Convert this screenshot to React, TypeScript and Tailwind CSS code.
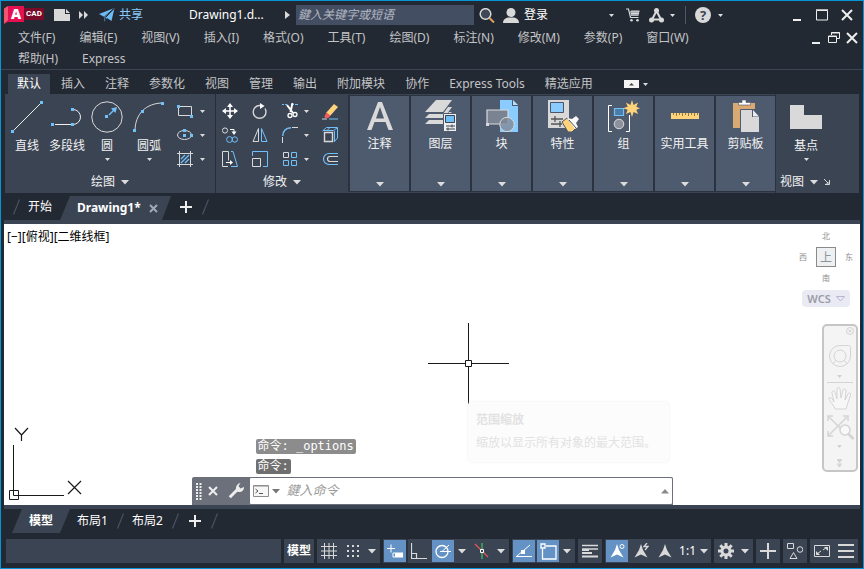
import type { ReactNode } from 'react';

const W = '#d9d9d9';
const B = '#72c0fa';

function Caret({ big = false }: { big?: boolean }) {
  return big ? (
    <svg width="8" height="5" viewBox="0 0 8 5" className="shrink-0"><path d="M0 0h8L4 4.6z" fill="#dcdcdc" /></svg>
  ) : (
    <svg width="5" height="3" viewBox="0 0 5 3" className="shrink-0"><path d="M0 0h5L2.5 3z" fill="#dcdcdc" /></svg>
  );
}

function Dot({ x, y }: { x: number; y: number }) {
  return <rect x={x} y={y} width="3" height="3" fill={B} />;
}

function Svg({ w, h, children }: { w: number; h: number; children: ReactNode }) {
  return (
    <svg width={w} height={h} viewBox={`0 0 ${w} ${h}`} fill="none" className="shrink-0">
      {children}
    </svg>
  );
}

/* ---------- title bar ---------- */

function TitleBar() {
  return (
    <header className="flex h-[26px] shrink-0 items-center pt-[2px] pr-[10px] pl-[3px] text-[12px] text-white">
      <button aria-label="应用程序菜单" className="relative h-[18px] w-10 shrink-0">
        <svg width="40" height="18" viewBox="0 0 40 18">
          <path d="M0 2.500 4 0v14.500L0 18z" fill="#f0566f" />
          <path d="M4 0h16v16H4l-4 2 4-3.500z" fill="#e51050" />
          <path d="M20 2h20v12H20z" fill="#7a0a2a" />
        </svg>
        <span className="absolute top-0 left-[4px] w-4 text-center text-[14px] leading-4 font-black">A</span>
        <span className="absolute top-[2px] left-[20px] w-5 text-center font-['Roboto'] text-[8px] leading-3 font-bold">CAD</span>
      </button>
      <button aria-label="新建" className="ml-[10px]">
        <Svg w={16} h={12}><path d="M0 0h11v5h5v7H0z" fill={W} /><path d="M12 0l4 4h-4z" fill={W} /></Svg>
      </button>
      <button aria-label="更多" className="ml-[9px]">
        <Svg w={9} h={8}><path d="M0 0l4 4-4 4zM5 0l4 4-4 4z" fill={W} /></Svg>
      </button>
      <button className="ml-[11px] flex items-center gap-1 text-[#8ac9fa]">
        <Svg w={16} h={14}>
          <path d="M0 6L15.500 0 12.500 13 8 10l-2.500 3.500V9z" fill="#6fbcf5" />
          <path d="M5.300 9L15 .5 6.600 9.500v3" stroke="#222933" />
        </Svg>
        <span>共享</span>
      </button>
      <h1 className="ml-[46px] w-24 text-[12px] font-normal">Drawing1.d...</h1>
      <svg width="5" height="8" viewBox="0 0 5 8" className="shrink-0"><path d="M0 0l5 4-5 4z" fill={W} /></svg>
      <input
        type="text"
        aria-label="搜索"
        placeholder="鍵入关键字或短语"
        className="ml-[6px] h-5 w-[178px] bg-[#444e62] px-[2px] pb-[2px] text-[12px] italic outline-none placeholder:text-[#b4b9c2]"
      />
      <button aria-label="搜索" className="ml-[5px]">
        <Svg w={16} h={15}>
          <circle cx="6.500" cy="6" r="5.300" fill="#3f4856" stroke={W} strokeWidth="1.500" />
          <path d="M10.500 10l4.500 4.500" stroke="#e0a060" strokeWidth="2" />
        </Svg>
      </button>
      <button className="ml-2 flex items-center gap-[5px]">
        <Svg w={16} h={15}><circle cx="8" cy="4.500" r="4.500" fill={W} /><path d="M0 15c0-4 3-5 5-5.500h6c2 .5 5 1.500 5 5.500z" fill={W} /></Svg>
        <span>登录</span>
      </button>
      <button aria-label="登录选项" className="ml-[61px]"><Caret /></button>
      <button aria-label="应用商店" className="ml-3">
        <Svg w={14} h={14}>
          <path d="M0 1h2.500l2 8.500h8" stroke={W} strokeWidth="1.200" />
          <path d="M4 3h9.500l-1 5H5z" fill="#a9acb2" />
          <path d="M5 3h8.500M5 5.500h8" stroke={W} />
          <circle cx="5.500" cy="12.300" r="1.300" fill={W} /><circle cx="11.500" cy="12.300" r="1.300" fill={W} />
        </Svg>
      </button>
      <button aria-label="连接" className="ml-[9px] flex items-center gap-[6px]">
        <Svg w={15} h={15}>
          <path d="M7.500 3L3 11.500h9z" stroke={W} strokeWidth="2" />
          <circle cx="7.500" cy="2.500" r="2.500" fill={W} /><circle cx="2.500" cy="12" r="2.500" fill={W} /><circle cx="12.500" cy="12" r="2.500" fill={W} />
        </Svg>
        <Caret />
      </button>
      <span className="ml-[10px] h-[18px] w-px bg-[#4d5768]" />
      <button aria-label="帮助" className="ml-[9px] flex items-center gap-[7px]">
        <span className="flex h-4 w-4 items-center justify-center rounded-full bg-[#d9d9d9] text-[13px] leading-4 font-bold text-[#3b4453]">?</span>
        <Caret />
      </button>
      <div className="ml-auto flex items-center">
        <button aria-label="最小化"><Svg w={8} h={12}><path d="M0 10h8v2H0z" fill="#eee" /></Svg></button>
        <button aria-label="最大化" className="ml-[15px]"><Svg w={12} h={12}><path d="M.5 1.500h11v9.500H.5zM0 .8h12" stroke="#eee" /></Svg></button>
        <button aria-label="关闭" className="ml-[13px]"><Svg w={12} h={12}><path d="M1 1l10 10M11 1L1 11" stroke="#eee" strokeWidth="2" /></Svg></button>
      </div>
    </header>
  );
}

/* ---------- menu ---------- */

const menus = ['文件(F)', '编辑(E)', '视图(V)', '插入(I)', '格式(O)', '工具(T)', '绘图(D)', '标注(N)', '修改(M)', '参数(P)', '窗口(W)', '帮助(H)', 'Express'];

function MenuBar() {
  return (
    <div className="flex shrink-0 items-start border-b border-[#3b4453] pr-[5px]">
      <nav className="flex flex-1 flex-wrap gap-x-6 pr-[70px] pl-[17px] text-[12px] text-[#c3c4c6]">
        {menus.map((m) => (
          <button key={m} className="h-[21px] pt-px leading-5">{m}</button>
        ))}
      </nav>
      <div className="flex h-[21px] items-center">
        <button aria-label="最小化图形"><Svg w={8} h={12}><path d="M0 10h8v2H0z" fill="#eee" /></Svg></button>
        <button aria-label="还原图形" className="ml-2"><Svg w={12} h={11}><path d="M3.500 3V.5h8v6H9M.5 4h8v6.500h-8zM0 4.500h9M3 1h9" stroke="#eee" /></Svg></button>
        <button aria-label="关闭图形" className="ml-[6px]"><Svg w={12} h={12}><path d="M1 1l10 10M11 1L1 11" stroke="#eee" strokeWidth="2" /></Svg></button>
      </div>
    </div>
  );
}

const ribbonTabs = ['默认', '插入', '注释', '参数化', '视图', '管理', '输出', '附加模块', '协作', 'Express Tools', '精选应用'];

function RibbonTabs() {
  return (
    <nav className="mt-1 flex h-5 shrink-0 items-center gap-[2px] pl-[7px] text-[12px]">
      {ribbonTabs.map((t, i) => (
        <button key={t} className={i === 0 ? 'h-5 bg-[#3b4453] px-[9px] leading-5 text-white' : 'h-5 px-[9px] leading-5 text-[#c3c4c6]'}>{t}</button>
      ))}
      <button aria-label="最小化功能区" className="ml-[20px] flex items-center gap-1">
        <Svg w={15} h={8}><path d="M0 0h15v8H0z" fill="#f4f4f4" /><path d="M5 5.500h5L7.500 3z" fill="#444" /></Svg>
        <Caret />
      </button>
    </nav>
  );
}

/* ---------- ribbon ---------- */

const drawTools: { label: string; more: boolean; icon: ReactNode }[] = [
  {
    label: '直线', more: false,
    icon: <Svg w={32} h={32}><path d="M3 29L29 3" stroke="#eee" /><Dot x={0} y={29} /><Dot x={29} y={0} /></Svg>,
  },
  {
    label: '多段线', more: false,
    icon: <Svg w={32} h={32}><path d="M4 23.500h17M22 23.500a7.500 7.500 0 0 0 0-15" stroke="#eee" /><Dot x={0} y={22} /><Dot x={20} y={22} /><Dot x={20} y={7} /></Svg>,
  },
  {
    label: '圆', more: true,
    icon: <Svg w={32} h={32}><circle cx="16" cy="16" r="15.200" stroke={W} /><Dot x={14} y={14} /><path d="M18 14l6-6" stroke={B} strokeWidth="1.500" /><path d="M26 6l-1.500 6L20 7.500z" fill={B} /></Svg>,
  },
  {
    label: '圆弧', more: true,
    icon: <Svg w={32} h={32}><path d="M2 30C2 13 13 2 30 2" stroke={W} /><Dot x={0} y={28} /><Dot x={8} y={9} /><Dot x={28} y={1} /></Svg>,
  },
];

const shapeTools: { label: string; icon: ReactNode }[] = [
  { label: '矩形', icon: <Svg w={16} h={16}><path d="M1.500 3.500h13v9h-13z" stroke={W} /><Dot x={0} y={2} /><Dot x={13} y={12} /></Svg> },
  { label: '椭圆', icon: <Svg w={16} h={16}><ellipse cx="7.500" cy="8" rx="7" ry="4.500" stroke={W} /><Dot x={6} y={2} /><Dot x={6} y={7} /><Dot x={13} y={7} /></Svg> },
  { label: '图案填充', icon: <Svg w={16} h={16}><path d="M0 2.500h16M0 13.500h16M2.500 0v16M13.500 0v16" stroke={W} /><path d="M4 8l4-4M4 12l8-8M8 12l4-4" stroke={B} strokeWidth="1.300" /></Svg> },
];

const modifyTools: { label: string; more?: boolean; icon: ReactNode }[] = [
  { label: '移动', icon: <Svg w={16} h={16}><path d="M8 1v14M1 8h14" stroke="#fff" strokeWidth="1.500" /><path d="M8 0l3 4H5zM8 16l3-4H5zM0 8l4-3v6zM16 8l-4-3v6z" fill="#fff" /></Svg> },
  { label: '旋转', icon: <Svg w={16} h={16}><path d="M9 2.500H7.500a6.400 6.400 0 1 0 6.500 6.400c0-1.400-.5-2.600-1-3.400" stroke={W} strokeWidth="1.400" /><path d="M8 0l4.500 3L8 6z" fill="#fff" /></Svg> },
  { label: '修剪', more: true, icon: <Svg w={16} h={16}><path d="M0 1.500h5" stroke={B} strokeDasharray="2 1" /><path d="M9 1.500h7" stroke={B} strokeDasharray="3 1" /><path d="M5 2l6 8M10.500 0L8.500 9" stroke="#fff" strokeWidth="2" /><circle cx="8" cy="12.500" r="2" stroke="#fff" strokeWidth="1.300" /><circle cx="13" cy="11.500" r="2" stroke="#fff" strokeWidth="1.300" /></Svg> },
  { label: '删除', icon: <Svg w={16} h={17}><path d="M12 1l4 3-8 9-4-3z" fill="#ffd37a" /><path d="M4.500 9.500l4 3-2 2.500H3l-.5-2z" fill="#ee5f5b" /><path d="M0 16h5" stroke={W} /><path d="M7 16h9" stroke={B} /></Svg> },
  { label: '复制', icon: <Svg w={16} h={16}><circle cx="3" cy="3.500" r="2.600" stroke={W} /><path d="M8 2.500h4v3" stroke="#fff" /><path d="M9.500 4.500h5L12 8z" fill="#fff" /><circle cx="7.500" cy="12.500" r="2.900" stroke={B} /><circle cx="12.800" cy="12.500" r="2.700" stroke={B} /></Svg> },
  { label: '镜像', icon: <Svg w={16} h={16}><path d="M6.500 1.500v13H1z" stroke={W} /><path d="M9.500 1.500v13H15z" stroke={B} /></Svg> },
  { label: '圆角', more: true, icon: <Svg w={16} h={16}><path d="M.5 10v6M10 .5h6" stroke={W} /><path d="M.7 9C1 4 4 1 9 .8" stroke={B} strokeWidth="1.400" /></Svg> },
  { label: '分解', icon: <Svg w={16} h={16}><path d="M2.500 5.500h8v9h-8z" stroke={W} strokeWidth="1.400" /><path d="M.5 4L4.500.5h11V11L12 15M1 3.500h10.500L15 1M12.500 4v10M5 3.500L8 .5" stroke={B} /></Svg> },
  { label: '拉伸', icon: <Svg w={16} h={16}><path d="M6 15.500H.5V.5h6v9" stroke={W} /><path d="M9 .5h2l4.500 15H9" stroke={B} /><path d="M4 11.500h4" stroke="#fff" /><path d="M8 9l3 2.500L8 14z" fill="#fff" /></Svg> },
  { label: '缩放', icon: <Svg w={16} h={16}><path d="M.5 5V.5h15v15H11" stroke={B} /><path d="M.5 7.500h8v8h-8z" stroke={W} /></Svg> },
  { label: '阵列', more: true, icon: <Svg w={16} h={16}><path d="M1.500 1.500h5v5h-5z" stroke={W} /><path d="M9.500 1.500h5v5h-5zM1.500 9.500h5v5h-5zM9.500 9.500h5v5h-5z" stroke={B} /></Svg> },
  { label: '偏移', icon: <Svg w={16} h={16}><path d="M16 2.500H7a5.500 5.500 0 0 0 0 11h9" stroke={B} strokeWidth="1.200" /><path d="M16 5.500H8a2.500 2.500 0 0 0 0 5h8" stroke={W} strokeWidth="1.200" /></Svg> },
];

const collapsed: { label: string; icon: ReactNode }[] = [
  { label: '注释', icon: <Svg w={32} h={32}><path d="M3 30L14 2h4l11 28h-4.500l-3-8h-11l-3 8zM12 18.500h8L16 7z" fill={W} /></Svg> },
  {
    label: '图层',
    icon: (
      <Svg w={32} h={32}>
        <path d="M11 0h16L18 12H0z" fill={W} /><path d="M23 7h4l-8 11H0l4-4h14zM24 12h3l-4 3v9H0l4-4h14z" fill={W} />
        <path d="M18.500 13.500h13v18h-13z" fill="#eee" stroke="#4e5a6d" /><path d="M20.500 15.500h9v7h-9z" fill={B} stroke="#3b4453" /><path d="M21 26h9M21 29h9M27 24.500v3M23 27.500v3" stroke="#3b4453" />
      </Svg>
    ),
  },
  {
    label: '块',
    icon: (
      <Svg w={32} h={32}>
        <path d="M14 0h12v6h6v26H14z" fill="#8accff" /><path d="M27 0l5 5h-5z" fill="#b4ddff" />
        <path d="M1 10h21v14H1z" fill="#7a8392" stroke={W} strokeWidth="1.200" /><path d="M0 23h3v3H0z" fill={W} /><circle cx="21" cy="24.500" r="7.200" fill="#7f8998cc" stroke={W} />
      </Svg>
    ),
  },
  {
    label: '特性',
    icon: (
      <Svg w={32} h={32}>
        <path d="M1 0h21v28H1z" fill={W} /><path d="M3.500 2.500h13v10h-13z" fill="#8accff" stroke="#4a5568" />
        <path d="M4 19h12M4 24h11M8 16v6M13 21v6" stroke="#555" strokeWidth="1.300" />
        <path d="M15 22l5-4 9 10-4 4h-4z" fill="#ffd37a" stroke="#4a5568" /><path d="M20 18l5 1 4-3 3 3-3 4 2 4-3 2z" fill="#fafafa" /><path d="M22 20l7 8" stroke="#4a5568" />
      </Svg>
    ),
  },
  {
    label: '组',
    icon: (
      <Svg w={32} h={32}>
        <path d="M4 5.500H.5v26H4M18 31.500h3.500V15" stroke="#fff" /><path d="M6.500 8.500h9v7h-9z" fill="#4c7ba3" stroke={B} strokeWidth="1.200" />
        <circle cx="11" cy="24" r="4.800" fill="#8b929e" stroke={W} />
        <path d="M24 0l1.600 5L30 2.500l-1.700 4.200 3.700 1.500-3.700 1.600L30 14l-4.400-2L24 17l-1.600-5L18 14l1.700-4.200L15 8.200l4.700-1.500L18 2.500 22.400 5z" fill="#ffd37a" />
      </Svg>
    ),
  },
  { label: '实用工具', icon: <Svg w={32} h={32}><path d="M2 13h28v6H2z" fill="#ffd37a" /><path d="M4.500 13v2M7.500 13v3M10.500 13v2M13.500 13v3M16.500 13v2M19.500 13v3M22.500 13v2M25.500 13v3M28.500 13v2" stroke="#8b7a50" /></Svg> },
  {
    label: '剪贴板',
    icon: (
      <Svg w={32} h={32}>
        <path d="M3 3h22v25H3z" fill="#d8a972" /><path d="M8.500 2.500H12V0h4v2.500h4.500V5h-12z" fill="#fff" stroke="#4a5568" strokeWidth=".6" />
        <path d="M10.500 9.500h11.500l7.500 7.500v15.500h-19z" fill={W} stroke="#4e5a6d" /><path d="M22 9h8v8h-8z" fill="#4e5a6d" /><path d="M23 10l6 6.500h-6z" fill="#eee" />
      </Svg>
    ),
  },
];

function PanelTitle({ children }: { children: ReactNode }) {
  return <button className="mx-auto flex h-[18px] items-center gap-[6px] leading-[18px]">{children}<Caret big /></button>;
}

function Ribbon() {
  return (
    <section className="mx-1 flex h-[99px] shrink-0 bg-[#3b4453] text-[12px] text-[#f2f2f2]">
      <div className="flex w-[211px] shrink-0 flex-col border-r border-[#262d38] pb-[2px]">
        <div className="flex flex-1 pl-[2px]">
          {drawTools.map((t) => (
            <button key={t.label} className="flex w-10 flex-col items-center pt-[7px] last-of-type:w-[44px]">
              {t.icon}
              <span className="mt-1 text-center leading-[18px] whitespace-nowrap">{t.label}</span>
              {t.more && <span className="mt-[3px]"><Caret /></span>}
            </button>
          ))}
          <div className="flex flex-col pt-[5px] pl-[6px]">
            {shapeTools.map((t) => (
              <button key={t.label} aria-label={t.label} className="flex h-6 items-center gap-[7px]">{t.icon}<Caret /></button>
            ))}
          </div>
        </div>
        <PanelTitle>绘图</PanelTitle>
      </div>
      <div className="flex w-[132px] shrink-0 flex-col pb-[2px]">
        <div className="grid flex-1 grid-cols-[30px_30px_40px_24px] content-start pt-[5px] pl-[6px]">
          {modifyTools.map((t) => (
            <button key={t.label} aria-label={t.label} className="flex h-6 items-center gap-[6px]">{t.icon}{t.more && <Caret />}</button>
          ))}
        </div>
        <PanelTitle>修改</PanelTitle>
      </div>
      <div className="flex shrink-0 pt-px pb-px">
        {collapsed.map((p) => (
          <button key={p.label} className="flex w-[61px] flex-col items-center border-2 border-t border-b border-r-0 border-[#2b3340] bg-[#4e5a6d] pt-1">
            {p.icon}
            <span className="mt-[3px] leading-[18px] whitespace-nowrap">{p.label}</span>
            <span className="mt-auto mb-1"><Caret big /></span>
          </button>
        ))}
      </div>
      <div className="flex flex-1 flex-col border-l border-[#2b3340] pb-[2px] pl-1">
        <button className="flex w-[52px] flex-1 flex-col items-center pt-[7px]">
          <Svg w={32} h={32}><path d="M0 4h14v10h18v14H0z" fill={W} /></Svg>
          <span className="mt-1 leading-[18px]">基点</span>
          <span className="mt-[3px]"><Caret /></span>
        </button>
        <div className="flex h-[18px] items-center gap-[6px] leading-[18px]">
          <button className="flex items-center gap-[6px]">视图<Caret big /></button>
          <button aria-label="视图选项"><Svg w={6} h={6}><path d="M0 0l4 4M5.500 1v4.500H1M4 3v2H2" stroke={W} /></Svg></button>
        </div>
      </div>
    </section>
  );
}

/* ---------- document tabs ---------- */

function Slash() {
  return <svg width="7" height="16" viewBox="0 0 7 16" className="shrink-0"><path d="M6.500.5l-6 15" stroke="#4a5362" strokeWidth="1.200" /></svg>;
}

function Plus() {
  return <Svg w={12} h={12}><path d="M0 6h12M6 0v12" stroke="#eee" strokeWidth="2" /></Svg>;
}

function FileTabs() {
  return (
    <nav className="mx-[3px] flex h-[31px] shrink-0 items-center border-b-4 border-[#3b4453] pl-[9px] text-[12px] text-white">
      <Slash />
      <button className="ml-2 h-6">开始</button>
      <div className="ml-2 flex h-6 w-[111px] items-center gap-2 self-end bg-[#3b4453] pl-[17px] [clip-path:polygon(10px_0,100%_0,102px_100%,0_100%)]">
        <button className="font-bold">Drawing1*</button>
        <button aria-label="关闭选项卡"><Svg w={9} h={9}><path d="M1 1l7 7M8 1L1 8" stroke="#a3a9b3" strokeWidth="2" /></Svg></button>
      </div>
      <button aria-label="新图形" className="ml-[9px]"><Plus /></button>
      <span className="ml-[10px]"><Slash /></span>
    </nav>
  );
}

/* ---------- drawing area ---------- */

function ViewCube() {
  return (
    <div className="absolute top-[6px] right-[7px] flex w-[54px] flex-col items-center text-[8px] leading-3 text-[#8f8f8f]">
      <span>北</span>
      <div className="my-[5px] flex w-full items-center justify-between">
        <span>西</span>
        <button className="h-5 w-5 border border-[#8a8a8a] bg-[#eef0f2] text-[12px] leading-[17px] text-[#8d949b]">上</button>
        <span>东</span>
      </div>
      <span>南</span>
      <button className="mt-[6px] flex h-[17px] w-12 items-center justify-center gap-[5px] rounded bg-[#e9eaf4] text-[11px] font-semibold text-[#9b9ca6]">
        WCS<Svg w={9} h={6}><path d="M.5.5h8l-4 4.500z" stroke="#b5b8cc" /></Svg>
      </button>
    </div>
  );
}

function NavBar() {
  return (
    <div className="absolute top-[100px] right-[2px] h-[148px] w-9 rounded-[5px] border-2 border-[#c6c6c6] bg-[#f4f4f4]">
      <svg width="32" height="144" viewBox="0 0 32 144" fill="none" stroke="#d4d4d4">
        <circle cx="26" cy="5" r="3.500" /><path d="M24.500 3.500l3 3M27.500 3.500l-3 3" />
        <path d="M16 19.500h8.500q2 0 2 2V30a10.500 10.500 0 1 1-10.500-10.500z" /><circle cx="16" cy="30" r="6" /><path d="M9 38l3-4M23 38l-3-4" />
        <path d="M13 49h5l-2.500 3zM13 119h5l-2.500 3z" fill="#d2d2d2" stroke="none" />
        <path d="M3 56.500h26" />
        <path d="M11 83c-1-4-5-7-6-10-.5-2 2-2 4 1l1 2-2-9c-.5-2 2-3 3-1l2 7 0-10c0-2 3-2 3 0l1 9 2-8c.5-2 3-1 3 1l-1 9 3-6c1-2 3-1 2.500 1l-3 9-1.500 5z" fill="#f7f7f7" />
        <path d="M5 91l18 18M23 91L5 109" strokeWidth="1.500" /><path d="M4 95v-5h5M19 90h5v5M4 105v5h5" strokeWidth="1.500" />
        <circle cx="21" cy="104" r="5" fill="#f8f8f8" strokeWidth="1.500" /><path d="M24.500 108l5 5" strokeWidth="2.500" />
        <path d="M13 133.500h5M13 138h5" /><path d="M13 134h5l-2.500 3zM13 138.500h5l-2.500 3z" fill="#d2d2d2" stroke="none" />
      </svg>
    </div>
  );
}

function CommandLine() {
  return (
    <div className="absolute inset-x-0 bottom-0 flex justify-center">
      <div className="w-[481px]">
        <div className="ml-16 flex flex-col items-start gap-[5px] font-['DejaVu_Sans_Mono','Noto_Sans_CJK_SC',monospace] text-[12px] leading-[15px] text-white">
          <output className="h-[15px] rounded-[2px] bg-[#8c8c8c] px-[2px] whitespace-pre">命令: _options</output>
          <output className="h-[15px] rounded-[2px] bg-[#6f6f6f] px-[2px]">命令:</output>
        </div>
        <div className="mt-[3px] flex h-7 rounded-t-[2px] bg-[#6b707b]">
          <div className="flex w-[57px] items-center pl-1">
            <Svg w={6} h={18}><path d="M1 1v17M4.500 1v17" stroke="#eee" strokeWidth="2" strokeDasharray="2 1" /></Svg>
            <button aria-label="关闭命令行" className="ml-[6px]"><Svg w={10} h={10}><path d="M1 1l8 8M9 1L1 9" stroke="#eee" strokeWidth="2" /></Svg></button>
            <button aria-label="自定义" className="ml-[10px]">
              <Svg w={16} h={16}><path d="M1.800 14.200L9.500 6.500" stroke="#eee" strokeWidth="3" /><path d="M12.500 0l-2 3 2 2.500L16 4c.3 3-2 5.500-5 5C8.500 8.600 7.500 7 8 4.500S10 .3 12.500 0z" fill="#eee" /></Svg>
            </button>
          </div>
          <div className="flex flex-1 items-center rounded-[2px] border border-[#6b707b] bg-white px-[3px]">
            <button aria-label="最近使用的命令" className="flex items-center gap-[3px]">
              <Svg w={16} h={12}><path d="M.5.5h15v11H.5z" fill="#f6f6f6" stroke="#8d8d8d" /><path d="M1 1h14" stroke="#8d8d8d" /><path d="M2.500 4l2.500 2-2.500 2M6 8.500h4" stroke="#555" /></Svg>
              <Svg w={8} h={5}><path d="M0 0h8L4 4.500z" fill="#777" /></Svg>
            </button>
            <input type="text" aria-label="命令" placeholder="鍵入命令" className="ml-[6px] h-5 min-w-0 flex-1 px-px pb-[2px] text-[13px] italic outline-none placeholder:text-[#9a9a9a]" />
            <button aria-label="命令历史"><Svg w={8} h={5}><path d="M0 4.500h8L4 0z" fill="#8a8a8a" /></Svg></button>
          </div>
        </div>
      </div>
    </div>
  );
}

function Canvas() {
  return (
    <main className="relative mx-[3px] min-h-[280px] flex-1 overflow-hidden bg-white">
      <button className="absolute top-[4px] left-[3px] text-[12px] leading-[18px] text-black">[−][俯视][二维线框]</button>
      <svg width="81" height="81" viewBox="0 0 81 81" fill="none" stroke="#1a1a1a" className="absolute top-[99px] left-[424px]">
        <path d="M0 40.500h37M44 40.500h37M40.500 0v37M40.500 44v37M37.500 37.500h6v6h-6z" />
      </svg>
      <svg width="76" height="76" viewBox="0 0 76 76" fill="none" stroke="#1a1a1a" className="absolute bottom-[2px] left-[4px]">
        <path d="M5.500 18v50.500H56M1.500 63.500h9v9h-9z" /><path d="M7 1l6.500 7L20 1M13.500 8v6M60 54l13 13M73 54L60 67" strokeWidth="1.200" />
      </svg>
      <div role="tooltip" className="absolute top-[178px] left-[464px] h-[60px] w-[201px] rounded bg-[#fcfcfc] px-2 pt-[6px] text-[12px] leading-[23px] whitespace-nowrap text-[#e2e2e2] shadow-[0_0_3px_#efefef]">
        <strong className="block font-semibold">范围缩放</strong>
        <p>缩放以显示所有对象的最大范围。</p>
      </div>
      <ViewCube />
      <NavBar />
      <CommandLine />
    </main>
  );
}

function LayoutTabs() {
  return (
    <nav className="mx-[3px] flex h-7 shrink-0 items-center border-t-4 border-[#3b4453] pl-2 text-[12px] text-white">
      <button className="h-6 w-[58px] bg-[#3b4453] font-bold [clip-path:polygon(10px_0,100%_0,48px_100%,0_100%)]">模型</button>
      <button className="ml-[7px]">布局1</button>
      <span className="ml-[9px]"><Slash /></span>
      <button className="ml-2">布局2</button>
      <span className="ml-[9px]"><Slash /></span>
      <button aria-label="新建布局" className="ml-[10px]"><Plus /></button>
      <span className="ml-[10px]"><Slash /></span>
    </nav>
  );
}

/* ---------- status bar ---------- */

function Group({ children }: { children: ReactNode }) {
  return <div className="flex h-6 shrink-0 items-center bg-[#3b4453] px-px">{children}</div>;
}

function Tool({ label, on = false, children }: { label: string; on?: boolean; children: ReactNode }) {
  return (
    <button aria-label={label} aria-pressed={on} className={on ? 'flex h-[22px] w-[22px] items-center justify-center bg-[#6492c4]' : 'flex h-[22px] w-[22px] items-center justify-center'}>
      {children}
    </button>
  );
}

function More({ label }: { label: string }) {
  return <button aria-label={label} className="flex h-[22px] w-[15px] items-center justify-center"><Caret big /></button>;
}

function Gap() {
  return <span className="w-[2px]" />;
}

const peak = 'M8 1l2 6 4.500 7.500L8 11.500l-6.500 3L6 7z';

function StatusBar() {
  return (
    <footer className="mt-[6px] mb-[5px] flex shrink-0 items-center gap-[3px] px-[5px] text-[12px] text-white">
      <div className="h-6 flex-1 bg-[#3b4453]" />
      <Group><button className="w-7 font-semibold">模型</button></Group>
      <Group>
        <Tool label="显示栅格"><Svg w={16} h={16}><path d="M3.500 0v16M8 0v16M12.500 0v16M0 3.500h16M0 8h16M0 12.500h16" stroke={W} /></Svg></Tool>
        <Gap />
        <Tool label="捕捉模式"><Svg w={14} h={14}><path d="M1 2h13M1 7h13M1 12h13" stroke={W} strokeWidth="2" strokeDasharray="2 3" /></Svg></Tool>
        <More label="捕捉设置" />
      </Group>
      <Group>
        <Tool label="动态输入" on><Svg w={16} h={14}><path d="M0 4.500h8M4 .5v8M6 9h10v4H6z" stroke="#fff" /><path d="M8 9h8v4H8z" fill="#fff" /></Svg></Tool>
        <span className="h-6 w-[2px] bg-[#2b3340]" />
        <Tool label="正交"><Svg w={16} h={16}><path d="M.5 0v15.500H16M1 10.500h4.500V15" stroke={W} strokeWidth="1.200" /></Svg></Tool>
        <Gap />
        <Tool label="极轴追踪" on><Svg w={17} h={16}><circle cx="7" cy="8.500" r="6" stroke="#fff" strokeWidth="1.300" /><path d="M5 8.500h11M7 8.500L14 2" stroke="#fff" /></Svg></Tool>
        <More label="极轴设置" />
        <Gap />
        <Tool label="等轴测"><Svg w={16} h={16}><path d="M1 1l13 13" stroke="#e05555" strokeWidth="1.200" /><path d="M8 0v16" stroke="#3fc46a" strokeWidth="1.200" /><path d="M6.500 6.500h3v3h-3z" fill="#3b4453" stroke="#fff" /></Svg></Tool>
        <More label="等轴测设置" />
      </Group>
      <Group>
        <Tool label="对象捕捉追踪" on><Svg w={17} h={14}><path d="M0 12.500h16M1 12L14 1" stroke="#fff" /><path d="M5 6h4v4H5z" fill="#fff" /></Svg></Tool>
        <Gap />
        <Tool label="对象捕捉" on><Svg w={17} h={17}><path d="M1 1h4v4H1zM6 3h10v13H2.500V6" stroke="#fff" strokeWidth="1.300" /></Svg></Tool>
        <More label="捕捉选项" />
      </Group>
      <Group><Tool label="线宽"><Svg w={16} h={14}><path d="M0 1.500h16M0 5h16M0 9h10" stroke={W} strokeWidth="1.500" /><path d="M0 5h7v2H0zM0 8h10v2H0zM0 11.500h16v2H0z" fill={W} /></Svg></Tool></Group>
      <Group>
        <Tool label="注释可见性" on><Svg w={16} h={16}><path d={peak} fill="#fff" /><circle cx="13" cy="3.500" r="2" stroke="#fff" /></Svg></Tool>
        <Gap />
        <Tool label="自动缩放"><Svg w={16} h={16}><path d={peak} fill={W} /><path d="M14 0l-3 3.500h4L12 7" stroke={W} strokeWidth="1.300" /></Svg></Tool>
        <Gap />
        <Tool label="注释比例"><Svg w={16} h={16}><path d={peak} fill={W} /></Svg></Tool>
        <button className="flex h-[22px] w-[34px] items-center justify-end gap-1 pr-[2px]"><span>1:1</span><Caret big /></button>
      </Group>
      <Group>
        <Tool label="切换工作空间">
          <Svg w={16} h={16}><circle cx="8" cy="8" r="4" stroke={W} strokeWidth="3" /><path d="M8 0v3M8 13v3M0 8h3M13 8h3M2.300 2.300l2.200 2.200M11.500 11.500l2.200 2.200M2.300 13.700l2.200-2.200M11.500 4.500l2.200-2.200" stroke={W} strokeWidth="3" /></Svg>
        </Tool>
        <More label="工作空间选项" />
      </Group>
      <Group><Tool label="注释监视器"><Svg w={16} h={16}><path d="M0 8h16M8 0v16" stroke={W} strokeWidth="2" /></Svg></Tool></Group>
      <Group><Tool label="隔离对象"><Svg w={16} h={16}><path d="M.5.5h6v5h-6zM6.500 9.500l3.500 6H3z" stroke={W} /><circle cx="13" cy="6.500" r="2.800" stroke={W} /></Svg></Tool></Group>
      <Group>
        <Tool label="全屏显示"><Svg w={16} h={12}><path d="M.5.5h15v11H.5z" stroke={W} /><path d="M9 5l4-3M3 9l4-3" stroke={W} /><path d="M10 2h4v4zM2 6v4h4z" fill={W} /></Svg></Tool>
        <Gap />
        <Tool label="自定义"><Svg w={16} h={14}><path d="M0 1h16M0 7h16M0 13h16" stroke={W} strokeWidth="2" /></Svg></Tool>
      </Group>
    </footer>
  );
}

export default function App() {
  return (
    <div className="flex min-h-screen flex-col border border-[#0696d7] bg-[#222933] font-['Noto_Sans','Noto_Sans_CJK_SC',sans-serif]">
      <TitleBar />
      <MenuBar />
      <RibbonTabs />
      <Ribbon />
      <FileTabs />
      <Canvas />
      <LayoutTabs />
      <StatusBar />
    </div>
  );
}
